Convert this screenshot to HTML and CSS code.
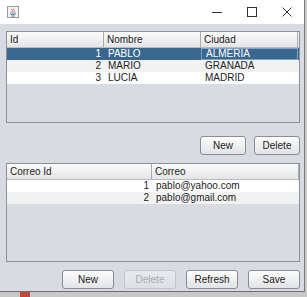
FILE: index.html
```html
<!DOCTYPE html>
<html lang="es">
<head>
    <meta charset="UTF-8">
    <title>Clientes</title>
    <link rel="stylesheet" href="styles.css">
</head>
<body>
    <div class="window">
        <!-- Title bar -->
        <div class="titlebar">
            <svg class="app-icon" width="12" height="12" viewBox="0 0 12 12">
                <rect x="0.5" y="0.5" width="11" height="11" fill="#f4f4f4" stroke="#9a9a9a"/>
                <path d="M4 3 Q6 4 5 6 M6 2.5 Q8 4 7 6" stroke="#d9532c" fill="none" stroke-width="0.8"/>
                <path d="M3 7 H9 M3.5 8.5 H8.5 M4 10 H8" stroke="#4a6fa5" stroke-width="0.8"/>
            </svg>
            <div class="spacer"></div>
            <div class="win-btn">
                <svg width="10" height="10" viewBox="0 0 10 10"><path d="M0 5.5 H10" stroke="#333" stroke-width="1"/></svg>
            </div>
            <div class="win-btn">
                <svg width="10" height="10" viewBox="0 0 10 10"><rect x="0.5" y="0.5" width="9" height="9" fill="none" stroke="#333"/></svg>
            </div>
            <div class="win-btn">
                <svg width="10" height="10" viewBox="0 0 10 10"><path d="M0.5 0.5 L9.5 9.5 M9.5 0.5 L0.5 9.5" stroke="#333" stroke-width="1"/></svg>
            </div>
        </div>

        <div class="content">
            <!-- Clients table -->
            <div class="table-panel clients">
                <div class="thead">
                    <div class="th c-id">Id</div>
                    <div class="th c-nombre">Nombre</div>
                    <div class="th c-ciudad">Ciudad</div>
                </div>
                <div class="tr selected">
                    <div class="td c-id num">1</div>
                    <div class="td c-nombre">PABLO</div>
                    <div class="td c-ciudad focus">ALMERIA</div>
                </div>
                <div class="tr alt">
                    <div class="td c-id num">2</div>
                    <div class="td c-nombre">MARIO</div>
                    <div class="td c-ciudad">GRANADA</div>
                </div>
                <div class="tr">
                    <div class="td c-id num">3</div>
                    <div class="td c-nombre">LUCIA</div>
                    <div class="td c-ciudad">MADRID</div>
                </div>
            </div>

            <div class="actions top-actions">
                <button class="btn">New</button>
                <button class="btn">Delete</button>
            </div>

            <!-- Emails table -->
            <div class="table-panel emails">
                <div class="thead">
                    <div class="th c-cid">Correo Id</div>
                    <div class="th c-correo">Correo</div>
                </div>
                <div class="tr">
                    <div class="td c-cid num">1</div>
                    <div class="td c-correo">pablo@yahoo.com</div>
                </div>
                <div class="tr alt">
                    <div class="td c-cid num">2</div>
                    <div class="td c-correo">pablo@gmail.com</div>
                </div>
            </div>

            <div class="actions bottom-actions">
                <button class="btn wide">New</button>
                <button class="btn wide" disabled>Delete</button>
                <button class="btn wide">Refresh</button>
                <button class="btn wide">Save</button>
            </div>
        </div>
    </div>
    <div class="taskbar">
        <div class="task-mark"></div>
    </div>
</body>
</html>
```

FILE: styles.css
```css
body {
    margin: 0;
    width: 307px;
    height: 297px;
    overflow: hidden;
    background-color: #c8c8c8;
    font-family: "Liberation Sans", Arial, sans-serif;
    font-size: 10px;
    color: #222;
}
.window {
    width: 304px;
    height: 291px;
    border-right: 1px solid #7a7a7a;
    border-bottom: 1px solid #6e6e6e;
    background-color: #d8dbe1;
    display: flex;
    flex-direction: column;
}
.titlebar {
    height: 24px;
    background-color: #ffffff;
    display: flex;
    align-items: center;
    padding-left: 7px;
    flex-shrink: 0;
}
.app-icon {
    display: block;
}
.spacer {
    flex: 1;
}
.win-btn {
    width: 35px;
    height: 24px;
    display: flex;
    align-items: center;
    justify-content: center;
}
.content {
    flex: 1;
    padding: 7px 4px 0 6px;
    display: flex;
    flex-direction: column;
}
.table-panel {
    border: 1px solid #8d9197;
    background-color: #d8dbe1;
}
.table-panel.clients {
    height: 90px;
}
.table-panel.emails {
    height: 97px;
}
.thead {
    display: flex;
    height: 15px;
    background: linear-gradient(#fbfbfb, #e4e5e7);
    border-bottom: 1px solid #b8bbc0;
}
.th {
    border-right: 1px solid #a9acb1;
    padding-left: 3px;
    line-height: 15px;
    box-sizing: border-box;
}
.tr {
    display: flex;
    height: 12px;
    line-height: 12px;
    background-color: #ffffff;
}
.tr.alt {
    background-color: #f2f2f2;
}
.tr.selected {
    background-color: #386791;
    color: #ffffff;
}
.td {
    padding-left: 4px;
    box-sizing: border-box;
    white-space: nowrap;
}
.td.num {
    text-align: right;
    padding-right: 3px;
}
.td.focus {
    border: 1px solid #7fa3c7;
    line-height: 10px;
}
.c-id, .c-nombre {
    width: 97px;
}
.c-ciudad {
    width: 97px;
}
.c-cid {
    width: 145px;
}
.c-correo {
    width: 147px;
}
.actions {
    display: flex;
    justify-content: flex-end;
}
.top-actions {
    gap: 8px;
    margin: 13px 0 8px;
}
.bottom-actions {
    gap: 10px;
    margin-top: 8px;
}
.btn {
    font-family: "Liberation Sans", Arial, sans-serif;
    font-size: 10px;
    color: #1a1a1a;
    height: 19px;
    width: 46px;
    padding: 0;
    border: 1px solid #8a8d92;
    border-radius: 3px;
    background: linear-gradient(#fdfdfd, #e2e3e6);
}
.btn.wide {
    width: 52px;
}
.btn:disabled {
    color: #a9abae;
    border-color: #c2c5ca;
    background: linear-gradient(#e8eaee, #dcdfe4);
}
.taskbar {
    height: 5px;
    background-color: #c8c8c8;
    position: relative;
}
.task-mark {
    position: absolute;
    left: 20px;
    top: 0;
    width: 10px;
    height: 5px;
    background-color: #c0473e;
}
```
